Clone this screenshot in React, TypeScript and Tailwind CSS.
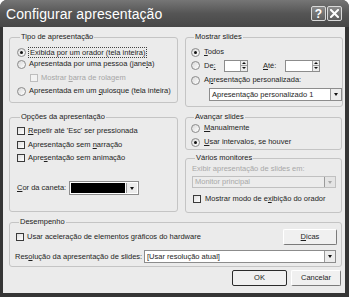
import React from "react";

const Radio = ({ checked = false }: { checked?: boolean }) => (
  <span className="relative inline-block w-[9px] h-[9px] rounded-full border border-[#8a8a8a] bg-gradient-to-br from-[#d8d8d8] to-white shrink-0">
    {checked && (
      <span className="absolute left-[2px] top-[2px] w-[3px] h-[3px] rounded-full bg-[#111]" />
    )}
  </span>
);

const Check = ({ disabled = false }: { disabled?: boolean }) => (
  <span
    className={
      "inline-block w-[8px] h-[8px] shrink-0 border " +
      (disabled ? "border-[#bdbdbd] bg-[#f2f2f2]" : "border-[#3a3a3a] bg-gradient-to-br from-[#dedede] to-white")
    }
  />
);

const U = ({ children }: { children: React.ReactNode }) => <span className="underline underline-offset-[1px]">{children}</span>;

const Arrow = ({ disabled = false }: { disabled?: boolean }) => (
  <span className={"flex items-center justify-center w-[11px] h-full border-l border-[#9a9a9a] " + (disabled ? "bg-[#e4e4e4]" : "bg-[#ececec]")}>
    <span
      className={
        "w-0 h-0 border-l-[2.5px] border-r-[2.5px] border-t-[3px] border-l-transparent border-r-transparent " +
        (disabled ? "border-t-[#a8a8a8]" : "border-t-[#111]")
      }
    />
  </span>
);

const Spin = ({ w }: { w: string }) => (
  <span className={"flex h-[12px] border border-[#8c8c8c] bg-white " + w}>
    <span className="flex-1" />
    <span className="flex flex-col w-[7px] border-l border-[#a0a0a0] bg-[#ececec]">
      <span className="flex-1 flex items-center justify-center border-b border-[#a0a0a0]">
        <span className="w-0 h-0 border-l-[2px] border-r-[2px] border-b-[2px] border-l-transparent border-r-transparent border-b-[#111]" />
      </span>
      <span className="flex-1 flex items-center justify-center">
        <span className="w-0 h-0 border-l-[2px] border-r-[2px] border-t-[2px] border-l-transparent border-r-transparent border-t-[#111]" />
      </span>
    </span>
  </span>
);

const Group = ({
  title,
  className,
  children,
}: {
  title: string;
  className: string;
  children: React.ReactNode;
}) => (
  <fieldset className={"border border-[#c4c4c4] rounded-[3px] " + className}>
    <legend className="ml-[3px] px-[1px] leading-[10px] text-[#222]">{title}</legend>
    {children}
  </fieldset>
);

export default function App() {
  return (
    <div className="w-[353px] h-[301px] bg-white font-['Liberation_Sans',Arial,sans-serif] text-[7.5px] leading-[10px] text-[#1e1e1e] whitespace-nowrap">
      <div className="w-[349px] h-[297px] flex flex-col rounded-t-[7px] bg-[#353535]">
        {/* title bar */}
        <div className="h-[27px] shrink-0 flex items-center rounded-t-[7px] bg-gradient-to-b from-[#767676] via-[#555555] to-[#474747] pl-[6px] pr-[7px]">
          <span className="text-white text-[14px] leading-[16px] tracking-[0.1px] pt-[1px]">Configurar apresentação</span>
          <div className="ml-auto flex gap-[1px]">
            <span className="w-[15px] h-[15px] flex items-center justify-center rounded-[2px] border border-[#d9d9d9] bg-gradient-to-b from-[#8a8a8a] to-[#5e5e5e] text-white text-[12px] font-bold leading-none">
              ?
            </span>
            <span className="w-[15px] h-[15px] flex items-center justify-center rounded-[2px] border border-[#d9d9d9] bg-gradient-to-b from-[#8a8a8a] to-[#5e5e5e]">
              <svg width="9" height="9" viewBox="0 0 9 9">
                <path d="M1 1 L8 8 M8 1 L1 8" stroke="white" strokeWidth="2" strokeLinecap="square" />
              </svg>
            </span>
          </div>
        </div>
        {/* body */}
        <div className="flex-1 ml-[3px] mr-[4px] mb-[4px] bg-[#ebebeb] pl-[6px] pr-[3px] pt-[5px] flex flex-col">
          <div className="flex gap-[7px]">
            {/* left column */}
            <div className="w-[169px] flex flex-col">
              <Group title="Tipo de apresentação" className="h-[71px] pl-[7px]">
                <div className="flex flex-col pt-[4px]">
                  <div className="h-[12px] flex items-center gap-[2px]">
                    <Radio checked />
                    <span className="border border-dotted border-[#444] px-[1px] leading-[9px]">Exibida por um orador (tela inteira)</span>
                  </div>
                  <div className="h-[12px] flex items-center gap-[3px]">
                    <Radio />
                    <span>Apresentada por uma pessoa (jane<U>l</U>a)</span>
                  </div>
                  <div className="h-[12px] mt-[2px] flex items-center gap-[3px] pl-[13px] text-[#a6a6a6]">
                    <Check disabled />
                    <span>Mostrar <U>b</U>arra de rolagem</span>
                  </div>
                  <div className="h-[12px] mt-[1px] flex items-center gap-[3px]">
                    <Radio />
                    <span>Apresentada em um <U>q</U>uiosque (tela inteira)</span>
                  </div>
                </div>
              </Group>
              <Group title="Opções da apresentação" className="mt-[9px] h-[100px] pl-[7px]">
                <div className="flex flex-col pt-[3px]">
                  <div className="h-[12px] flex items-center gap-[3px]">
                    <Check />
                    <span><U>R</U>epetir até 'Esc' ser pressionada</span>
                  </div>
                  <div className="h-[12px] mt-[2px] flex items-center gap-[3px]">
                    <Check />
                    <span>Apresentação sem <U>n</U>arração</span>
                  </div>
                  <div className="h-[12px] mt-[1px] flex items-center gap-[3px]">
                    <Check />
                    <span>Apre<U>s</U>entação sem animação</span>
                  </div>
                  <div className="mt-[17px] h-[14px] flex items-center">
                    <span className="w-[52px]"><U>C</U>or da caneta:</span>
                    <span className="flex h-[14px] w-[70px] border border-[#8c8c8c] bg-white p-[1px]">
                      <span className="flex-1 bg-black mr-[1px]" />
                      <Arrow />
                    </span>
                  </div>
                </div>
              </Group>
            </div>
            {/* right column */}
            <div className="w-[157px] flex flex-col">
              <Group title="Mostrar slides" className="h-[75px] pl-[5px]">
                <div className="flex flex-col pt-[4px]">
                  <div className="h-[12px] flex items-center gap-[4px]">
                    <Radio checked />
                    <span><U>T</U>odos</span>
                  </div>
                  <div className="h-[13px] mt-[1px] flex items-center">
                    <Radio />
                    <span className="ml-[4px] w-[20px]">De<U>:</U></span>
                    <Spin w="w-[24px]" />
                    <span className="ml-[15px] w-[22px]"><U>A</U>té:</span>
                    <Spin w="w-[35px]" />
                  </div>
                  <div className="h-[12px] mt-[2px] flex items-center gap-[4px]">
                    <Radio />
                    <span>A<U>p</U>resentação personalizada:</span>
                  </div>
                  <div className="mt-[2px] ml-[18px] w-[133px] h-[13px] flex border border-[#8c8c8c] bg-white">
                    <span className="flex-1 pl-[2px] leading-[11px]">Apresentação personalizado 1</span>
                    <Arrow />
                  </div>
                </div>
              </Group>
              <Group title="Avançar slides" className="mt-[5px] h-[38px] pl-[5px]">
                <div className="flex flex-col">
                  <div className="h-[12px] flex items-center gap-[4px]">
                    <Radio />
                    <span><U>M</U>anualmente</span>
                  </div>
                  <div className="h-[12px] mt-[2px] flex items-center gap-[4px]">
                    <Radio checked />
                    <span><U>U</U>sar intervalos, se houver</span>
                  </div>
                </div>
              </Group>
              <Group title="Vários monitores" className="mt-[3px] h-[60px] pl-[6px]">
                <div className="flex flex-col pt-[1px]">
                  <span className="h-[10px] text-[#a8a8a8]">Exibir apresentação de slides em:</span>
                  <div className="mt-[2px] w-[144px] h-[12px] flex border border-[#c0c0c0] bg-[#ececec]">
                    <span className="flex-1 pl-[2px] leading-[10px] text-[#a8a8a8]">Monitor principal</span>
                    <Arrow disabled />
                  </div>
                  <div className="h-[12px] mt-[5px] flex items-center gap-[4px] pl-[1px]">
                    <Check />
                    <span>Mostrar modo de e<U>x</U>ibição do orador</span>
                  </div>
                </div>
              </Group>
            </div>
          </div>
          <Group title="Desempenho" className="mt-[4px] h-[50px] w-[333px] pl-[6px] pr-[4px]">
            <div className="flex flex-col pt-[2px]">
              <div className="h-[16px] flex items-center gap-[3px]">
                <Check />
                <span>Usar aceleração de elementos gráficos do hardware</span>
                <span className="ml-auto w-[54px] h-[16px] flex items-center justify-center border border-t-white border-l-white border-r-[#7a7a7a] border-b-[#7a7a7a] rounded-[2px] bg-[#f0f0f0]">
                  <U>D</U>icas
                </span>
              </div>
              <div className="mt-[5px] h-[13px] flex items-center">
                <span className="w-[128px] -ml-[1px] mr-[1px]">Res<U>o</U>lução da apresentação de slides:</span>
                <div className="w-[192px] h-[13px] flex border border-[#8c8c8c] bg-white">
                  <span className="flex-1 pl-[2px] leading-[11px]">[Usar resolução atual]</span>
                  <Arrow />
                </div>
              </div>
            </div>
          </Group>
          <div className="mt-[3px] flex justify-end gap-[4px] pr-[1px]">
            <span className="w-[55px] h-[16px] flex items-center justify-center border border-[#2a2a2a] rounded-[2px] bg-[#f0f0f0]">
              OK
            </span>
            <span className="w-[50px] h-[16px] flex items-center justify-center border border-t-white border-l-white border-r-[#7a7a7a] border-b-[#7a7a7a] rounded-[2px] bg-[#f0f0f0]">
              Cancelar
            </span>
          </div>
        </div>
      </div>
    </div>
  );
}
